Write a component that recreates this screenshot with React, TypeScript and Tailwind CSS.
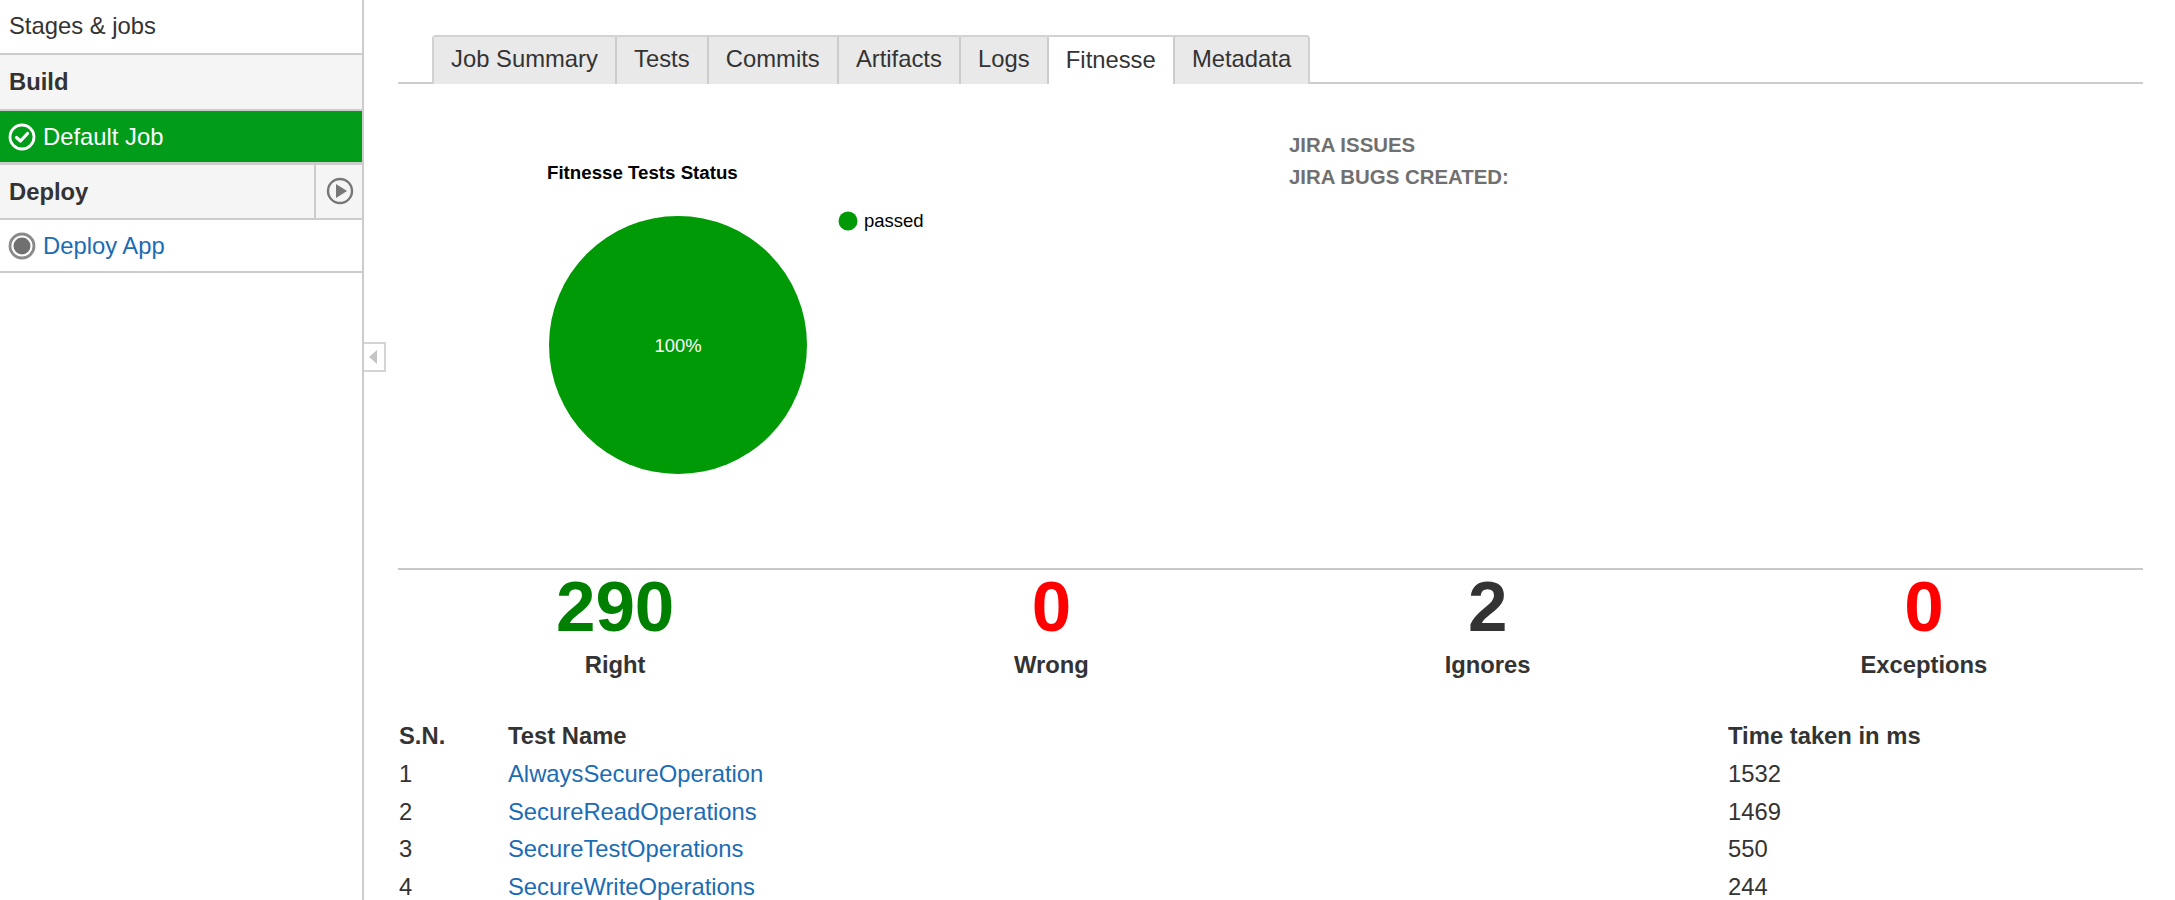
import React from "react";

const tabs = ["Job Summary", "Tests", "Commits", "Artifacts", "Logs", "Fitnesse", "Metadata"];
const stats = [
  { n: "290", label: "Right", color: "text-[#008000]" },
  { n: "0", label: "Wrong", color: "text-[#ff0000]" },
  { n: "2", label: "Ignores", color: "text-[#333333]" },
  { n: "0", label: "Exceptions", color: "text-[#ff0000]" },
];
const rows = [
  ["1", "AlwaysSecureOperation", "1532"],
  ["2", "SecureReadOperations", "1469"],
  ["3", "SecureTestOperations", "550"],
  ["4", "SecureWriteOperations", "244"],
];

export default function App() {
  return (
    <div className="relative flex h-[900px] w-full overflow-hidden bg-white font-['Liberation_Sans',Arial,sans-serif] text-[23.8px] text-[#333333]">
      <aside className="w-[364px] shrink-0 border-r-2 border-[#cccccc]">
        <div className="flex h-[55px] items-center border-b-2 border-[#cccccc] pl-[9px] pb-[2px]">Stages &amp; jobs</div>
        <div className="flex h-[56px] items-center border-b-2 border-[#cccccc] bg-[#f5f5f5] pl-[9px] font-bold">Build</div>
        <div className="flex h-[54px] items-center gap-[7px] border-b-[3px] border-[#cccccc] bg-[#009c1a] pl-[8px] pt-[1px] text-white">
          <svg width="28" height="28" viewBox="0 0 28 28" fill="none" stroke="white" strokeWidth="2.8">
            <circle cx="14" cy="14" r="12" />
            <path d="M8.5 14.5 L12.5 18 L19.5 10.5" strokeWidth="3.2" strokeLinecap="round" strokeLinejoin="round" />
          </svg>
          <span>Default Job</span>
        </div>
        <div className="flex h-[55px] items-stretch border-b-2 border-[#cccccc] bg-[#f5f5f5]">
          <div className="flex flex-1 items-center pl-[9px] font-bold">Deploy</div>
          <div className="flex w-[48px] items-center justify-center border-l-2 border-[#cccccc] pb-[2px] pl-[1px]">
            <svg width="28" height="28" viewBox="0 0 28 28">
              <circle cx="14" cy="14" r="12" fill="none" stroke="#777777" strokeWidth="2.4" />
              <path d="M10 7 L21 14 L10 21 Z" fill="#777777" />
            </svg>
          </div>
        </div>
        <div className="flex h-[53px] items-center gap-[7px] border-b-2 border-[#cccccc] pl-[8px] pt-[1px] text-[#1b6cb4]">
          <svg width="28" height="28" viewBox="0 0 28 28">
            <circle cx="14" cy="14" r="12" fill="none" stroke="#8a8a8a" strokeWidth="2.8" />
            <circle cx="14" cy="14" r="8.5" fill="#707070" />
          </svg>
          <span>Deploy App</span>
        </div>
      </aside>

      <div className="absolute left-[364px] top-[342px] flex h-[30px] w-[22px] items-center justify-center border-2 border-l-0 border-[#d4d4d4] bg-white">
        <svg width="10" height="14" viewBox="0 0 10 14">
          <path d="M8 0 L0 7 L8 14 Z" fill="#c4c4c4" />
        </svg>
      </div>

      <main className="min-w-0 flex-1 pl-[34px] pr-[32px] pt-[35px]">
        <div className="flex h-[49px] items-stretch border-b-2 border-[#cccccc] pl-[34px]">
          <div className="flex h-[49px] overflow-hidden rounded-t-[4px] border-x-2 border-t-2 border-[#d2d2d2]">
            {tabs.map((t, i) =>
              t === "Fitnesse" ? (
                <div key={t} className="z-10 flex h-[49px] items-center border-l-2 border-[#cccccc] bg-white px-[17.1px] pb-[4px]">
                  {t}
                </div>
              ) : i === 0 ? (
                <div key={t} className="flex h-[47px] items-center bg-[#e9e9e9] px-[17.1px] pb-[4px]">
                  {t}
                </div>
              ) : (
                <div key={t} className="flex h-[47px] items-center border-l-2 border-[#cccccc] bg-[#e9e9e9] px-[17.1px] pb-[4px]">
                  {t}
                </div>
              )
            )}
          </div>
        </div>

        <div className="flex h-[486px] border-b-2 border-[#c8c8c8]">
          <svg width="890" height="484" viewBox="0 0 890 484" className="shrink-0">
            <text x="149" y="94.5" fontSize="18.7" fontWeight="700" fill="#000000">Fitnesse Tests Status</text>
            <circle cx="280" cy="261" r="129" fill="#009a06" />
            <text x="280" y="268" fontSize="18.4" fill="#ffffff" textAnchor="middle">100%</text>
            <circle cx="450" cy="137" r="9.5" fill="#009a06" />
            <text x="466" y="143" fontSize="18.5" fill="#000000">passed</text>
          </svg>
          <div className="pl-[1px] pt-[45px] text-[20.4px] font-bold leading-[32px] text-[#707070]">
            <div>JIRA ISSUES</div>
            <div>JIRA BUGS CREATED:</div>
          </div>
        </div>

        <div className="-ml-[1px] mr-[1px] grid grid-cols-4 text-center">
          {stats.map((s) => (
            <div key={s.label} className="flex flex-col items-center">
              <div className={`mt-[1px] h-[72px] text-[71px] font-bold leading-[72px] ${s.color}`}>{s.n}</div>
              <div className="mt-[8px] leading-[28px] font-bold">{s.label}</div>
            </div>
          ))}
        </div>

        <table className="mt-[38px] w-full table-fixed border-collapse text-left">
          <colgroup>
            <col className="w-[110px]" />
            <col className="w-[1220px]" />
            <col />
          </colgroup>
          <thead>
            <tr className="h-[38px]">
              <th className="p-0 pl-[1px] font-bold">S.N.</th>
              <th className="p-0 font-bold">Test Name</th>
              <th className="p-0 font-bold">Time taken in ms</th>
            </tr>
          </thead>
          <tbody>
            {rows.map((r) => (
              <tr key={r[0]} className="h-[37.6px]">
                <td className="p-0 pl-[1px]">{r[0]}</td>
                <td className="p-0 text-[#1b6cb4]">{r[1]}</td>
                <td className="p-0">{r[2]}</td>
              </tr>
            ))}
          </tbody>
        </table>
      </main>
    </div>
  );
}
